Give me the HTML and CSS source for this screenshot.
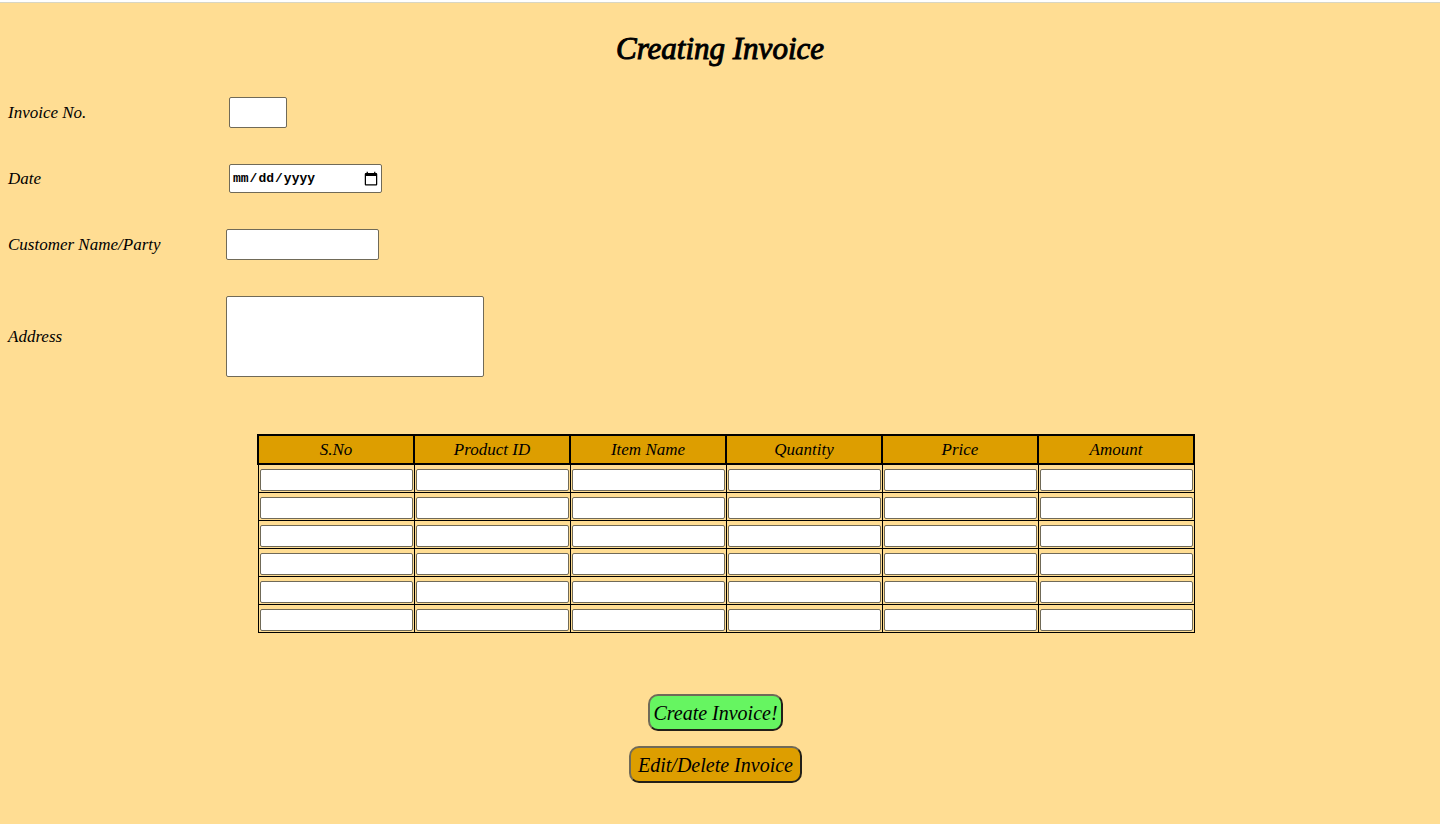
FILE: index.html
```html
<!DOCTYPE html>
<html lang="en">
<head>
<meta charset="utf-8">
<title>Creating Invoice</title>
<link rel="stylesheet" href="styles.css">
</head>
<body>
<form class="invoice">
  <h1 class="title">Creating Invoice</h1>
  <div class="fields">
    <div class="field">
      <label class="label" for="number">Invoice No.</label>
      <input class="box inset short" id="number" type="text">
    </div>
    <div class="field">
      <label class="label" for="date">Date</label>
      <input class="box inset date" id="date" type="date">
    </div>
    <div class="field">
      <label class="label" for="customer">Customer Name/Party</label>
      <input class="box" id="customer" type="text">
    </div>
    <div class="field">
      <label class="label" for="address">Address</label>
      <textarea class="box address" id="address"></textarea>
    </div>
  </div>
  <div class="items-wrap">
  <table class="items">
    <thead>
      <tr><th id="c1">S.No</th><th id="c2">Product ID</th><th id="c3">Item Name</th><th id="c4">Quantity</th><th id="c5">Price</th><th id="c6">Amount</th></tr>
    </thead>
    <tbody>
      <tr><td><input class="cell" aria-labelledby="c1"></td><td><input class="cell" aria-labelledby="c2"></td><td><input class="cell" aria-labelledby="c3"></td><td><input class="cell" aria-labelledby="c4"></td><td><input class="cell" aria-labelledby="c5"></td><td><input class="cell" aria-labelledby="c6"></td></tr>
      <tr><td><input class="cell" aria-labelledby="c1"></td><td><input class="cell" aria-labelledby="c2"></td><td><input class="cell" aria-labelledby="c3"></td><td><input class="cell" aria-labelledby="c4"></td><td><input class="cell" aria-labelledby="c5"></td><td><input class="cell" aria-labelledby="c6"></td></tr>
      <tr><td><input class="cell" aria-labelledby="c1"></td><td><input class="cell" aria-labelledby="c2"></td><td><input class="cell" aria-labelledby="c3"></td><td><input class="cell" aria-labelledby="c4"></td><td><input class="cell" aria-labelledby="c5"></td><td><input class="cell" aria-labelledby="c6"></td></tr>
      <tr><td><input class="cell" aria-labelledby="c1"></td><td><input class="cell" aria-labelledby="c2"></td><td><input class="cell" aria-labelledby="c3"></td><td><input class="cell" aria-labelledby="c4"></td><td><input class="cell" aria-labelledby="c5"></td><td><input class="cell" aria-labelledby="c6"></td></tr>
      <tr><td><input class="cell" aria-labelledby="c1"></td><td><input class="cell" aria-labelledby="c2"></td><td><input class="cell" aria-labelledby="c3"></td><td><input class="cell" aria-labelledby="c4"></td><td><input class="cell" aria-labelledby="c5"></td><td><input class="cell" aria-labelledby="c6"></td></tr>
      <tr><td><input class="cell" aria-labelledby="c1"></td><td><input class="cell" aria-labelledby="c2"></td><td><input class="cell" aria-labelledby="c3"></td><td><input class="cell" aria-labelledby="c4"></td><td><input class="cell" aria-labelledby="c5"></td><td><input class="cell" aria-labelledby="c6"></td></tr>
    </tbody>
  </table>
  </div>
  <div class="actions">
    <button class="button create" type="button">Create Invoice!</button>
    <button class="button edit" type="button">Edit/Delete Invoice</button>
  </div>
</form>
</body>
</html>
```

FILE: styles.css
```css
* {
  box-sizing: border-box;
}

html {
  background: #ffdd93;
  border-top: 2px solid #fff;
}

body {
  margin: 0;
  border-top: 1px solid #d8d6c4;
  color: #000;
  font-family: "Liberation Serif", serif;
  font-style: italic;
}

.invoice {
  display: flex;
  flex-direction: column;
  padding: 26px 8px;
}

.title {
  margin: 0 0 28px;
  font-size: 31px;
  font-weight: 400;
  line-height: 40px;
  text-align: center;
  -webkit-text-stroke: 1px #000;
}

.fields {
  display: flex;
  flex-direction: column;
  gap: 36px;
}

.field {
  display: flex;
  align-items: center;
}

.label {
  width: 218px;
  font-size: 17px;
  line-height: 24px;
}

.box {
  width: 153px;
  height: 31px;
  margin: 0;
  padding: 1px 2px;
  border: 1px solid #706a58;
  border-radius: 2px;
  background: #fff;
}

.inset {
  margin-left: 3px;
}

.short {
  width: 58px;
}

.date {
  height: 29px;
  color: #000;
  font-family: "Liberation Mono", monospace;
  font-size: 13px;
  font-weight: 700;
}

.date::-webkit-calendar-picker-indicator {
  width: 16px;
  height: 16px;
  padding: 0;
}

.address {
  width: 258px;
  height: 81px;
  resize: none;
}

.items-wrap {
  margin-top: 57px;
  padding-left: 12px;
}

.items {
  width: 938px;
  max-width: 100%;
  margin: 0 auto;
  border-collapse: collapse;
  table-layout: fixed;
}

.items th {
  height: 29px;
  padding: 0;
  border: 2px solid #000;
  background: #dd9e00;
  font-size: 17px;
  font-weight: 400;
  line-height: 24px;
}

.items td {
  padding: 4px 1px 1px;
  border: 1px solid #000;
}

.cell {
  display: block;
  width: 100%;
  height: 22px;
  padding: 1px 2px;
  border: 1px solid #706a58;
  border-radius: 2px;
  background: #fff;
}

.actions {
  display: flex;
  flex-direction: column;
  align-items: center;
  gap: 15px;
  margin-top: 61px;
  padding-right: 9px;
}

.button {
  height: 37px;
  border: 2px solid;
  border-color: #706a58 #221f18 #221f18 #706a58;
  border-radius: 10px;
  color: #000;
  font-family: inherit;
  font-size: 20px;
  font-style: italic;
  line-height: 32px;
}

.create {
  padding: 0 3px;
  background: #66f561;
}

.edit {
  padding: 0 7px;
  background: #dd9e00;
}
```
